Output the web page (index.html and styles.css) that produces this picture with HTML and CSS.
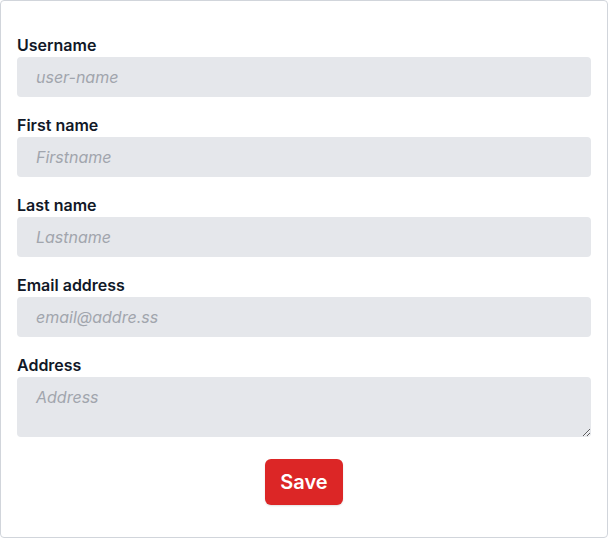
FILE: index.html
```html
<!DOCTYPE html>
<html>
<head>
<meta charset="utf-8">
<link rel="stylesheet" href="styles.css">
</head>
<body>
<form class="card">
  <div class="field">
    <label class="label" for="u">Username</label>
    <input class="input" id="u" placeholder="user-name">
  </div>
  <div class="field">
    <label class="label" for="f">First name</label>
    <input class="input" id="f" placeholder="Firstname">
  </div>
  <div class="field">
    <label class="label" for="l">Last name</label>
    <input class="input" id="l" placeholder="Lastname">
  </div>
  <div class="field">
    <label class="label" for="e">Email address</label>
    <input class="input" id="e" placeholder="email@addre.ss">
  </div>
  <div class="field">
    <label class="label" for="a">Address</label>
    <textarea class="input textarea" id="a" placeholder="Address"></textarea>
  </div>
  <div class="actions">
    <button type="button" class="btn">Save</button>
  </div>
</form>
</body>
</html>
```
FILE: styles.css
```css
* { box-sizing: border-box; }
html, body { margin: 0; padding: 0; background: #fff; }
body { font-family: Inter, "Noto Sans", sans-serif; color: #111827; }
.card {
  width: 608px;
  height: 538px;
  border: 1px solid #d1d5db;
  border-radius: 4px;
  padding: 32px 16px 32px 16px;
  display: flex;
  flex-direction: column;
  gap: 16px;
}
.field { display: flex; flex-direction: column; }
.label {
  font-size: 16px;
  font-weight: 600;
  line-height: 24px;
  color: #111827;
}
.input {
  display: block;
  width: 100%;
  height: 40px;
  border: none;
  border-radius: 4px;
  background: #e5e7eb;
  padding: 0 19px;
  font-family: Inter, "Noto Sans", sans-serif;
  font-size: 16px;
  font-style: italic;
  color: #111827;
  outline: none;
}
.input::placeholder { color: #a1a5ad; font-style: italic; }
.textarea {
  height: 60px;
  padding: 8px 19px;
  line-height: 24px;
  resize: vertical;
}
.actions { display: flex; justify-content: center; margin-top: 6px; }
.btn {
  font-family: Inter, "Noto Sans", sans-serif;
  background: #dc2626;
  color: #fff;
  border: none;
  border-radius: 6px;
  font-size: 20px;
  font-weight: 600;
  line-height: 28px;
  padding: 9px 15px;
  box-shadow: 0 1px 2px rgba(0,0,0,0.12);
}
```
